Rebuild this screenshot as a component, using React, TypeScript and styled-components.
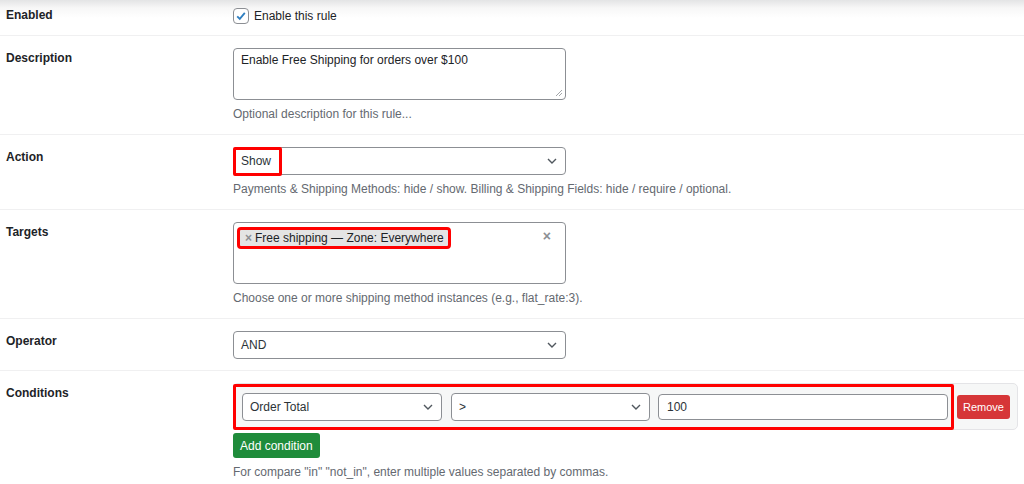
import styled, { createGlobalStyle } from 'styled-components';

const GlobalStyle = createGlobalStyle`
  html, body {
    margin: 0;
    padding: 0;
    background: #fff;
  }
  body {
    font-family: "Liberation Sans", Arial, sans-serif;
    font-size: 12px;
    color: #1d2327;
  }
`;

const Page = styled.div`
  width: 1024px;
  height: 484px;
  overflow: hidden;
  background: linear-gradient(to bottom, #e3e4e5 0px, #f7f7f7 8px, #ffffff 18px);
`;

const Row = styled.div<{ $top?: number; $bottom?: number }>`
  display: grid;
  grid-template-columns: 233px 1fr;
  padding: ${(p) => p.$top ?? 12}px 0 ${(p) => p.$bottom ?? 10}px;
  border-bottom: 1px solid #f0f0f1;

  &:last-child {
    border-bottom: none;
  }
`;

const Label = styled.div`
  padding-left: 6px;
  font-weight: 700;
  line-height: 20px;
  color: #1d2327;
`;

const Field = styled.div`
  display: flex;
  flex-direction: column;
  align-items: flex-start;
`;

const Help = styled.p`
  margin: 4px 0 0;
  line-height: 20px;
  color: #646970;
`;

const CheckLine = styled.label`
  display: flex;
  align-items: center;
  gap: 5px;
  line-height: 20px;
  padding-top: 1px;
`;

const Checkbox = styled.span`
  width: 14px;
  height: 14px;
  border: 1px solid #8c8f94;
  border-radius: 4px;
  background: #fff;
  display: flex;
  align-items: center;
  justify-content: center;
`;

const TextArea = styled.div`
  box-sizing: border-box;
  width: 333px;
  height: 52px;
  border: 1px solid #8c8f94;
  border-radius: 4px;
  padding: 1px 7px;
  line-height: 20px;
  position: relative;
`;

const Grip = styled.svg`
  position: absolute;
  right: 2px;
  bottom: 2px;
`;

const Select = styled.div<{ $width?: number }>`
  box-sizing: border-box;
  flex: none;
  width: ${(p) => p.$width ?? 333}px;
  height: 28px;
  border: 1px solid #8c8f94;
  border-radius: 4px;
  background: #fff;
  display: flex;
  align-items: center;
  justify-content: space-between;
  padding: 0 8px 0 7px;
  color: #2c3338;
  position: relative;
`;

const Marked = styled.span`
  position: absolute;
  left: -1px;
  top: -1px;
  width: 49px;
  height: 29px;
  box-sizing: border-box;
  border: 3px solid #f00;
  border-radius: 2px;
`;

const SelectText = styled.span`
  position: relative;
`;

const MultiBox = styled.div`
  box-sizing: border-box;
  width: 333px;
  height: 62px;
  border: 1px solid #8c8f94;
  border-radius: 4px;
  padding: 7px 6px;
  display: flex;
  align-items: flex-start;
  justify-content: space-between;
`;

const Tag = styled.span`
  display: inline-flex;
  align-items: center;
  gap: 3px;
  height: 16px;
  padding: 0 4px 0 5px;
  background: #e4e4e4;
  outline: 3px solid #f00;
  outline-offset: 0;
  border-radius: 1px;
  color: #1d2327;
`;

const TagX = styled.span`
  color: #8c8f94;
  font-size: 12px;
  font-weight: 700;
`;

const ClearX = styled.span`
  color: #8c8f94;
  font-size: 14px;
  font-weight: 700;
  margin: -2px 8px 0 0;
`;

const CondWrap = styled.div`
  box-sizing: border-box;
  width: 785px;
  height: 47px;
  border: 1px solid #e4e4e7;
  border-radius: 5px;
  background: #f6f7f7;
  display: flex;
  align-items: center;
  gap: 9px;
  padding: 0 8px;
  position: relative;
`;

const CondMark = styled.span`
  position: absolute;
  left: -1px;
  top: 0;
  width: 721px;
  height: 46px;
  box-sizing: border-box;
  border: 3px solid #f00;
  border-radius: 2px;
  pointer-events: none;
`;

const Input = styled.div`
  box-sizing: border-box;
  flex: none;
  width: 290px;
  height: 26px;
  margin-left: -1px;
  border: 1px solid #8c8f94;
  border-radius: 4px;
  background: #fff;
  padding: 0 8px;
  display: flex;
  align-items: center;
  color: #2c3338;
`;

const Button = styled.button<{ $tone: 'green' | 'red' }>`
  font-family: inherit;
  flex: none;
  border: none;
  color: #fff;
  border-radius: 3px;
  cursor: pointer;
  background: ${(p) => (p.$tone === 'green' ? '#1f8c3b' : '#d63638')};
  font-size: ${(p) => (p.$tone === 'green' ? 12 : 11)}px;
  height: ${(p) => (p.$tone === 'green' ? 25 : 24)}px;
  padding: 0 ${(p) => (p.$tone === 'green' ? 7 : 6)}px;
`;

const AddWrap = styled.div`
  margin-top: 3px;
`;

const Chevron = () => (
  <svg width="10" height="6" viewBox="0 0 10 6">
    <path d="M1 1l4 4 4-4" fill="none" stroke="#50575e" strokeWidth="1.4" />
  </svg>
);

export default function App() {
  return (
    <Page>
      <GlobalStyle />
      <Row $top={5} $bottom={9}>
        <Label>Enabled</Label>
        <Field>
          <CheckLine>
            <Checkbox>
              <svg width="12" height="12" viewBox="0 0 12 12">
                <path d="M2.2 6.3l2.6 2.6 5-6" fill="none" stroke="#2f7fc1" strokeWidth="1.8" />
              </svg>
            </Checkbox>
            Enable this rule
          </CheckLine>
        </Field>
      </Row>
      <Row>
        <Label>Description</Label>
        <Field>
          <TextArea>
            Enable Free Shipping for orders over $100
            <Grip width="8" height="8" viewBox="0 0 8 8">
              <path d="M7 1L1 7M7 4L4 7" stroke="#8c8f94" strokeWidth="0.8" />
            </Grip>
          </TextArea>
          <Help>Optional description for this rule...</Help>
        </Field>
      </Row>
      <Row>
        <Label>Action</Label>
        <Field>
          <Select>
            <Marked />
            <SelectText>Show</SelectText>
            <Chevron />
          </Select>
          <Help>Payments &amp; Shipping Methods: hide / show. Billing &amp; Shipping Fields: hide / require / optional.</Help>
        </Field>
      </Row>
      <Row>
        <Label>Targets</Label>
        <Field>
          <MultiBox>
            <Tag>
              <TagX>×</TagX>Free shipping — Zone: Everywhere
            </Tag>
            <ClearX>×</ClearX>
          </MultiBox>
          <Help>Choose one or more shipping method instances (e.g., flat_rate:3).</Help>
        </Field>
      </Row>
      <Row $bottom={11}>
        <Label>Operator</Label>
        <Field>
          <Select>
            <SelectText>AND</SelectText>
            <Chevron />
          </Select>
        </Field>
      </Row>
      <Row>
        <Label>Conditions</Label>
        <Field>
          <CondWrap>
            <CondMark />
            <Select $width={200}>
              <SelectText>Order Total</SelectText>
              <Chevron />
            </Select>
            <Select $width={199}>
              <SelectText>&gt;</SelectText>
              <Chevron />
            </Select>
            <Input>100</Input>
            <Button $tone="red">Remove</Button>
          </CondWrap>
          <AddWrap>
            <Button $tone="green">Add condition</Button>
          </AddWrap>
          <Help>For compare "in" "not_in", enter multiple values separated by commas.</Help>
        </Field>
      </Row>
    </Page>
  );
}
